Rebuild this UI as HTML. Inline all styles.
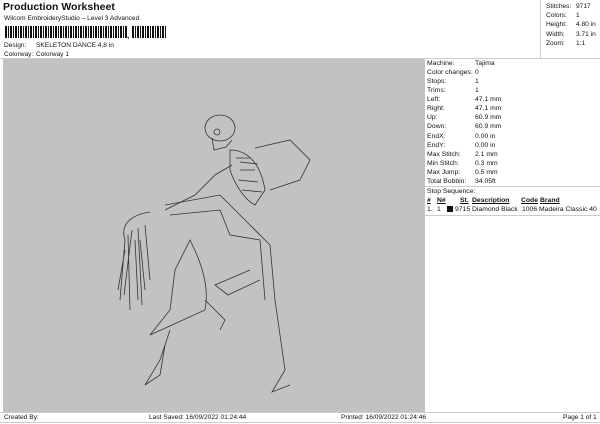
<!DOCTYPE html>
<html><head><style>
*{margin:0;padding:0;box-sizing:border-box}
body{width:600px;height:424px;background:#fff;font-family:"Liberation Sans",sans-serif;color:#111;position:relative;overflow:hidden}
.a{position:absolute;white-space:nowrap}
.s{font-size:6.6px;line-height:9px}
.b{font-size:10.5px;font-weight:bold}
.l{position:absolute;background:#ccc}
.r{position:absolute;left:427px;font-size:6.8px;line-height:9.06px}
u{text-decoration:underline}
</style></head><body>
<div class="a b" style="left:3px;top:1px">Production Worksheet</div>
<div class="a s" style="left:4px;top:14px">Wilcom EmbroideryStudio – Level 3 Advanced</div>
<div class="a" style="left:5px;top:26px;width:122px;height:12px;background:repeating-linear-gradient(90deg,#111 0 2px,#fff 2px 3px,#111 3px 4px,#fff 4px 5px)"></div>
<div class="a" style="left:127px;top:31px;font-size:8px;font-weight:bold">,</div>
<div class="a" style="left:132px;top:26px;width:35px;height:12px;background:repeating-linear-gradient(90deg,#111 0 2px,#fff 2px 3px,#111 3px 4px,#fff 4px 5px)"></div>
<div class="a s" style="left:4px;top:41px">Design:</div><div class="a s" style="left:36px;top:41px">SKELETON DANCE 4,8 in</div>
<div class="a s" style="left:4px;top:50px">Colorway:</div><div class="a s" style="left:36px;top:50px">Colorway 1</div>
<div class="l" style="left:540px;top:0;width:1px;height:58px"></div>
<div class="l" style="left:0;top:58px;width:600px;height:1px"></div>
<div class="a s" style="left:546px;top:2px;line-height:9.2px">Stitches:<br>Colors:<br>Height:<br>Width:<br>Zoom:</div>
<div class="a s" style="left:576px;top:2px;line-height:9.2px">9717<br>1<br>4.80 in<br>3.71 in<br>1:1</div>
<div class="a" style="left:3px;top:59px;width:422px;height:353px;background:#c2c2c2"></div>
<div class="r" style="top:59px">Machine:<br>Color changes:<br>Stops:<br>Trims:<br>Left:<br>Right:<br>Up:<br>Down:<br>EndX:<br>EndY:<br>Max Stitch:<br>Min Stitch:<br>Max Jump:<br>Total Bobbin:</div>
<div class="r" style="left:475px;top:59px">Tajima<br>0<br>1<br>1<br>47.1 mm<br>47.1 mm<br>60.9 mm<br>60.9 mm<br>0.00 in<br>0.00 in<br>2.1 mm<br>0.3 mm<br>0.5 mm<br>34.05ft</div>
<div class="l" style="left:425px;top:186px;width:175px;height:1px"></div>
<div class="r" style="top:187px">Stop Sequence:</div>
<div class="r" style="top:196px;font-weight:bold"><u>#</u></div>
<div class="r" style="left:437px;top:196px;font-weight:bold"><u>N#</u></div>
<div class="r" style="left:460px;top:196px;font-weight:bold"><u>St.</u></div>
<div class="r" style="left:472px;top:196px;font-weight:bold"><u>Description</u></div>
<div class="r" style="left:521px;top:196px;font-weight:bold"><u>Code</u></div>
<div class="r" style="left:540px;top:196px;font-weight:bold"><u>Brand</u></div>
<div class="r" style="top:205px">1.</div>
<div class="r" style="left:437px;top:205px">1</div>
<div class="a" style="left:447px;top:206px;width:6px;height:6px;background:#111"></div>
<div class="r" style="left:455px;top:205px">9715 Diamond Black</div>
<div class="r" style="left:522px;top:205px">1006 Madeira Classic 40</div>
<div class="l" style="left:425px;top:215px;width:175px;height:1px"></div>
<div class="l" style="left:0;top:412px;width:600px;height:1px"></div>
<div class="l" style="left:0;top:422px;width:600px;height:1px"></div>
<div class="a s" style="left:4px;top:413px">Created By:</div>
<div class="a s" style="left:149px;top:413px">Last Saved: 16/09/2022 01:24:44</div>
<div class="a s" style="left:341px;top:413px">Printed: 16/09/2022 01:24:46</div>
<div class="a s" style="left:563px;top:413px">Page 1 of 1</div>
<svg class="a" style="left:0;top:0" width="600" height="424" fill="none" stroke="#333" stroke-width="0.8">
<ellipse cx="220" cy="128" rx="15" ry="13"/>
<circle cx="217" cy="132" r="3"/>
<path d="M212 138 L214 150 L226 147 L232 140"/>
<path d="M230 150 C245 150 260 160 265 190 L255 205 C245 200 235 185 230 170 Z"/>
<path d="M240 162 L258 164 M240 170 L255 170 M238 180 L258 182 M242 190 L262 192 M236 158 L250 158"/>
<path d="M255 148 L290 140 L310 160 L300 180 L270 190"/>
<path d="M232 165 L215 175 L195 195 L165 210"/>
<path d="M150 212 C130 215 120 225 125 240 L120 300 M128 235 L130 310 M135 240 L138 300 M140 240 L145 290 M125 250 L118 290 M132 230 L124 295 M145 225 L150 280 M138 228 L142 305"/>
<path d="M165 205 L220 195 L250 225 L270 245 L275 300 L285 370 L272 392 L290 385"/>
<path d="M170 215 L220 210 L230 235 L260 240 L265 300"/>
<path d="M190 240 C200 260 210 285 205 310 L150 335 L170 310 L175 270 Z"/>
<path d="M205 300 L225 320 L220 330 M170 330 L160 360 L145 385 L160 375 L165 345"/>
<path d="M250 270 L215 285 L228 295 L260 280"/>
</svg>
</body></html>
